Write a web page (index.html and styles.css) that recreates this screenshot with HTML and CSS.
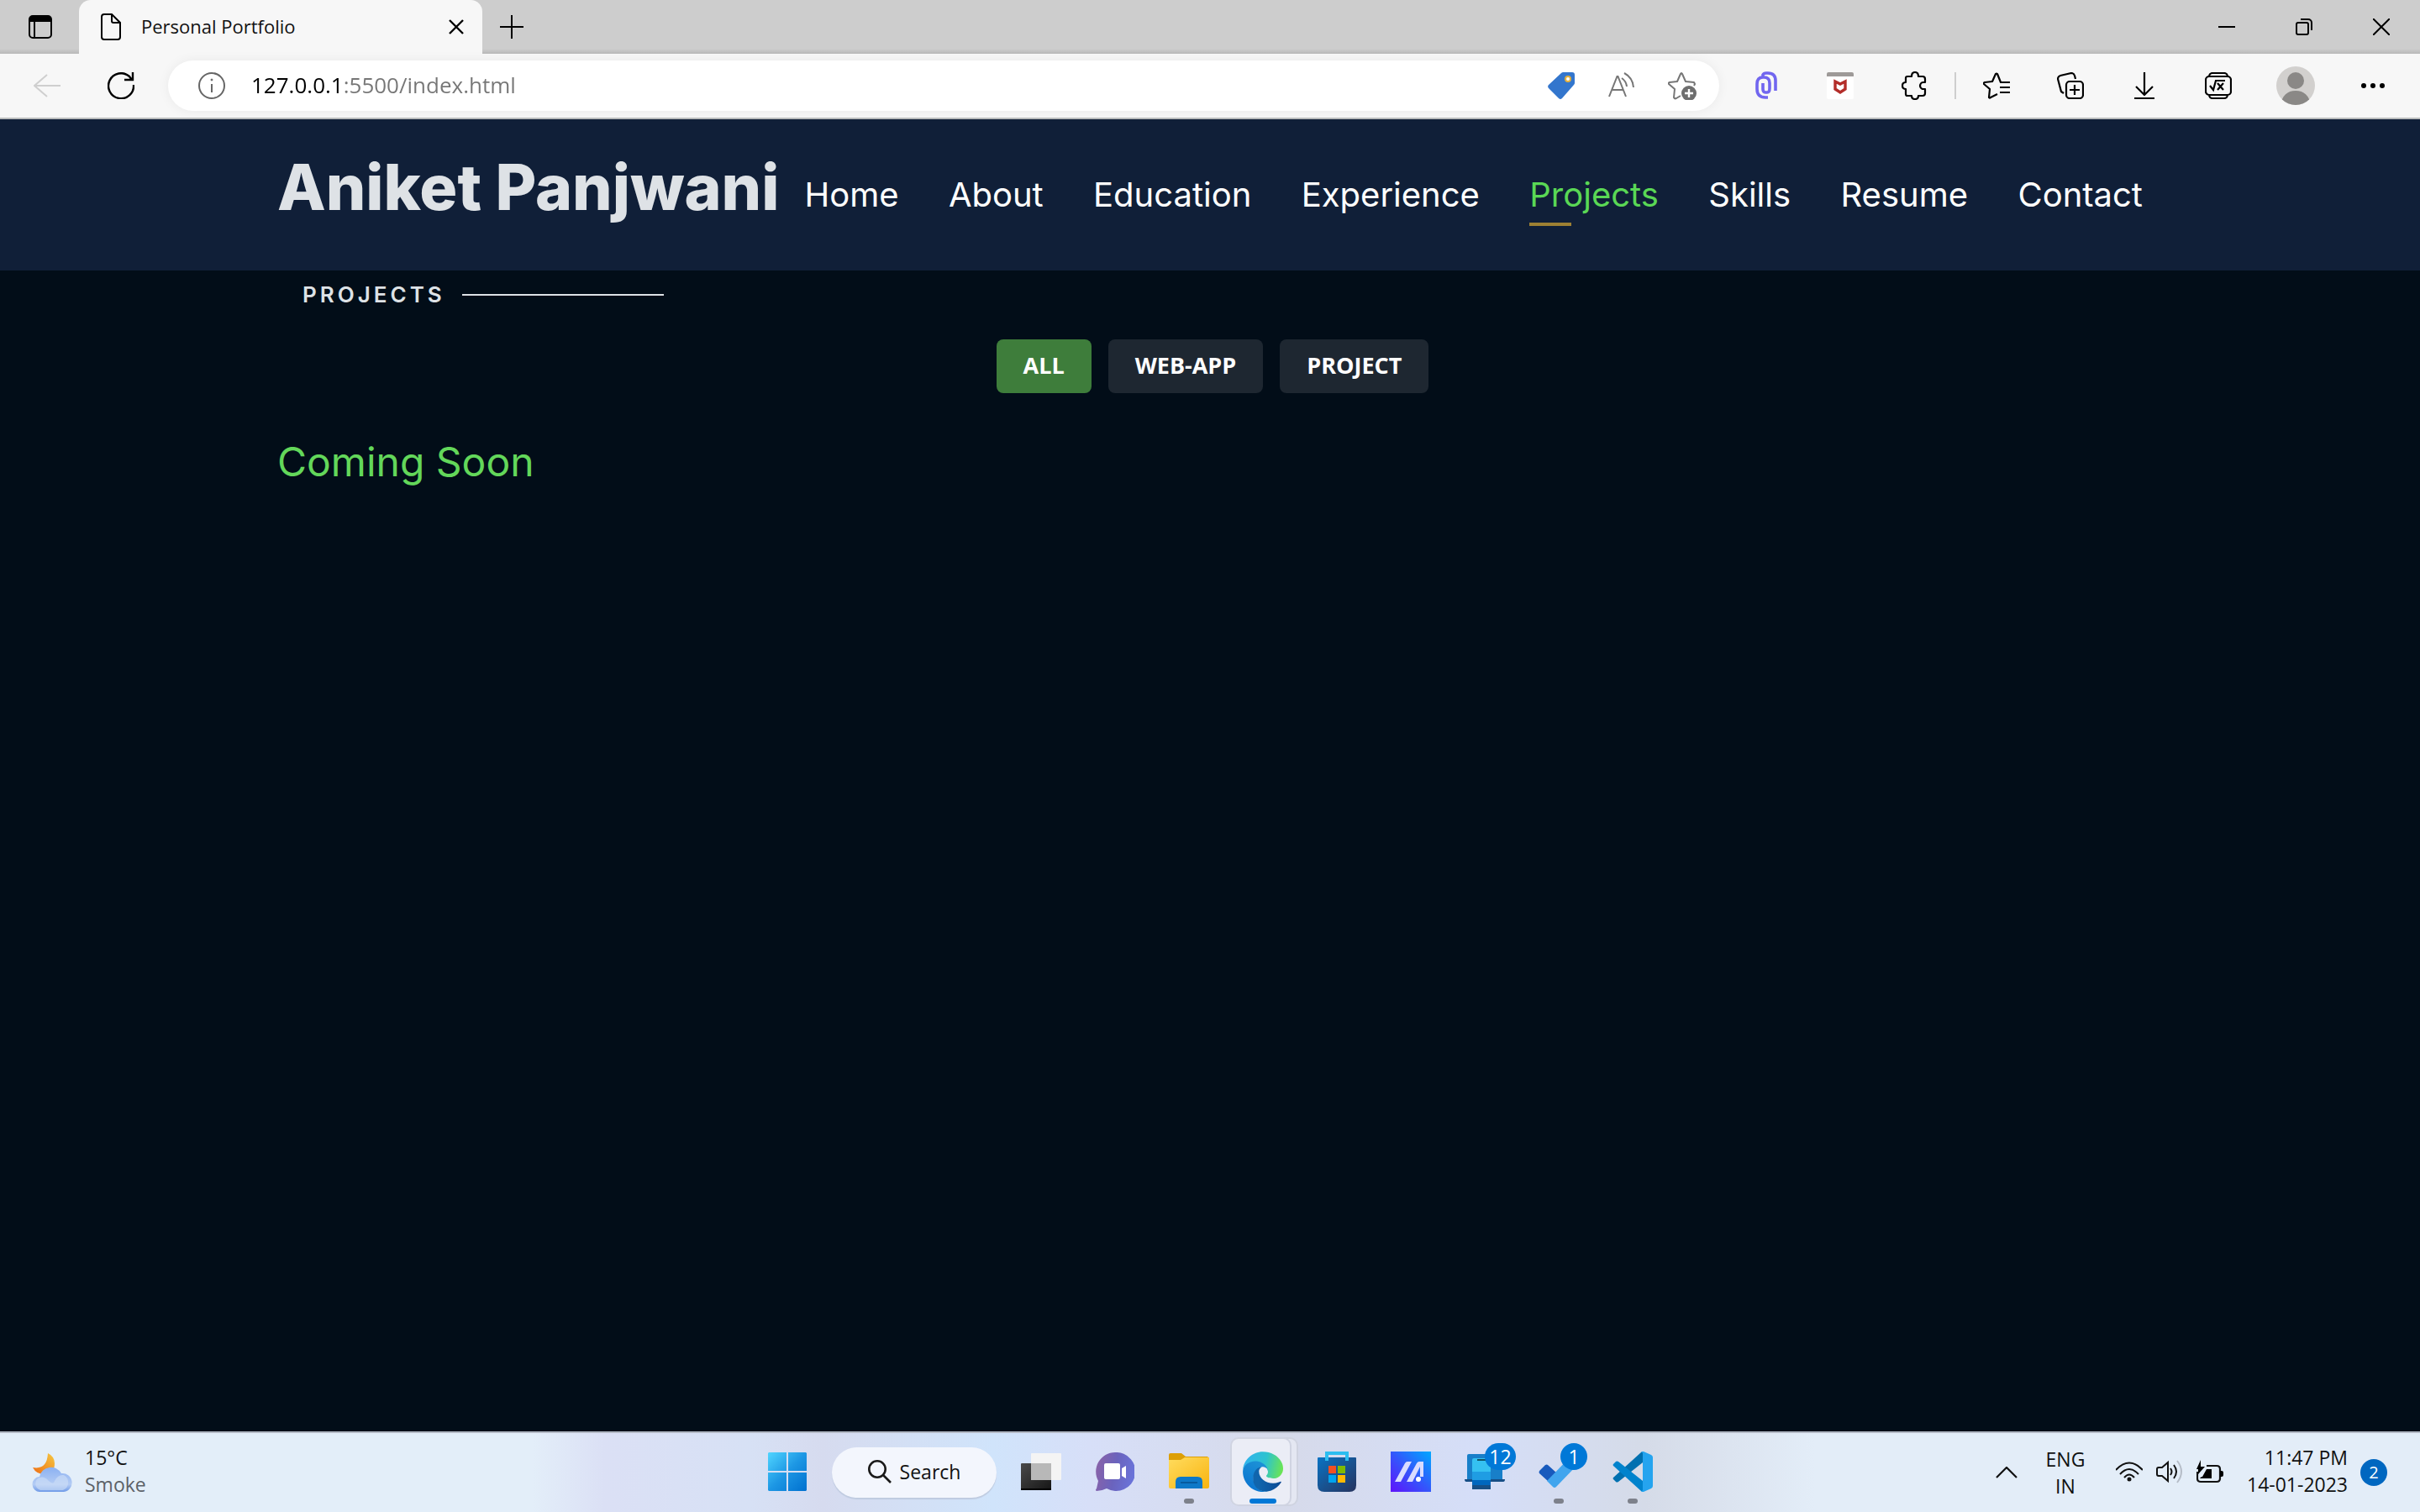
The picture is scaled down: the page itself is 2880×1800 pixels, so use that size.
FILE: index.html
```html
<!DOCTYPE html>
<html lang="en">
<head>
<meta charset="utf-8">
<meta name="viewport" content="width=device-width, initial-scale=1">
<title>Personal Portfolio</title>
<link rel="stylesheet" href="styles.css">
</head>
<body>
<div class="titlebar">
  <button class="tab-actions" aria-label="Tab actions menu">
    <svg width="28" height="28" viewBox="0 0 28 28"><rect x="1" y="1" width="26" height="26" rx="4" fill="none" stroke="#000" stroke-width="2"/><path d="M1 8V5a4 4 0 0 1 4-4h18a4 4 0 0 1 4 4v3z"/><path d="M7 8v19" stroke="#000" stroke-width="2"/></svg>
  </button>
  <div class="tab">
    <svg width="24" height="32" viewBox="0 0 24 32" fill="none" stroke="#000" stroke-width="2"><path d="M13 1H4a3 3 0 0 0-3 3v24a3 3 0 0 0 3 3h16a3 3 0 0 0 3-3V11zM13 1v8a2 2 0 0 0 2 2h8"/></svg>
    <span class="tab-title">Personal Portfolio</span>
    <button class="tab-close" aria-label="Close tab"><svg width="18" height="18" viewBox="0 0 18 18"><path d="M1 1l16 16M17 1L1 17" stroke="#000" stroke-width="2.4"/></svg></button>
  </div>
  <button class="new-tab" aria-label="New tab"><svg width="28" height="28" viewBox="0 0 28 28"><path d="M14 0v28M0 14h28" stroke="#000" stroke-width="2"/></svg></button>
  <div class="window-controls">
    <button aria-label="Minimize"><svg width="20" height="20" viewBox="0 0 20 20"><path d="M0 10h20" stroke="#000" stroke-width="2"/></svg></button>
    <button aria-label="Restore"><svg width="20" height="20" viewBox="0 0 20 20" fill="none" stroke="#000" stroke-width="2"><rect x="1" y="5" width="14" height="14" rx="2"/><path d="M6 1h9a4 4 0 0 1 4 4v9"/></svg></button>
    <button aria-label="Close"><svg width="20" height="20" viewBox="0 0 20 20"><path d="M0 0l20 20M20 0L0 20" stroke="#000" stroke-width="2"/></svg></button>
  </div>
</div>

<div class="toolbar">
  <button class="tool" aria-label="Back"><svg width="32" height="28" viewBox="0 0 32 28" fill="none" stroke="#cfcfcf" stroke-width="2"><path d="M32 14H1M16 1L1 14l15 13"/></svg></button>
  <button class="tool" aria-label="Refresh"><svg width="32" height="32" viewBox="0 0 32 32" fill="none" stroke="#000" stroke-width="2.4"><path d="M31 15A15 15 0 1 1 26 5l3 4M30 0v9H20"/></svg></button>
  <div class="address">
    <button class="site-info" aria-label="Site information"><svg width="32" height="32" viewBox="0 0 32 32" fill="none" stroke="#666" stroke-width="2"><circle cx="16" cy="16" r="15"/><path d="M16 14v10"/><circle cx="16" cy="9" r="1" fill="#666" stroke-width="1"/></svg></button>
    <input class="url" type="text" aria-label="Address" value="127.0.0.1:5500/index.html">
    <button class="chip" aria-label="Shopping"><svg width="32" height="32" viewBox="0 0 32 32"><path d="M19 0h10a3 3 0 0 1 3 3v10a3 3 0 0 1-1 2L17 31a3 3 0 0 1-4 0L1 19a3 3 0 0 1 0-4L16 1a4 4 0 0 1 3-1z" fill="#3376cd"/><circle cx="24" cy="8" r="3" fill="#fff" stroke="#e5b13c" stroke-width="2"/></svg></button>
    <button class="chip" aria-label="Read aloud"><svg width="32" height="32" viewBox="0 0 32 32" fill="none" stroke="#767676" stroke-width="2"><path d="M1 29L10.500 5h1L21 29M5 21h13M16 7a14 14 0 0 1 6 10M19 1a21 21 0 0 1 11 17"/></svg></button>
    <button class="chip" aria-label="Add to favorites"><svg width="34" height="34" viewBox="0 0 34 34" fill="none" stroke="#767676" stroke-width="2" stroke-linejoin="round"><path d="M31 17l1-2-1-2-10-1-4-9q-1-2-2 0l-4 9-9 1q-2 1-1 2l7 6-1 10q1 2 3 1l5-3"/><circle cx="25" cy="26" r="9" fill="#6e6e6e" stroke="none"/><path d="M25 21v10M20 26h10" stroke="#fff" stroke-width="2.400"/></svg></button>
  </div>
  <div class="extensions">
    <button class="tool" aria-label="Clip extension"><svg width="26" height="34" viewBox="0 0 26 34" fill="none" stroke="#7166ef" stroke-width="3.600"><path d="M9 6V4q1-2 4-2h2q9 0 9 9v12M15 31h-3Q2 31 2 21v-6q0-8 7-8h1q7 0 7 7v6q0 5-3 5h-2q-3 0-3-4v-7"/></svg></button>
    <button class="tool" aria-label="McAfee WebAdvisor"><svg width="32" height="32" viewBox="0 0 32 32"><rect width="32" height="32" rx="2" fill="#fff"/><path d="M0 5V2q0-2 2-2h28q2 0 2 2v3z" fill="#9e9a98"/><path d="M10 11l6 3 6-3v9l-6 4-6-4z" fill="#fff" stroke="#b32d29" stroke-width="3.400"/></svg></button>
    <button class="tool" aria-label="Extensions"><svg width="30" height="34" viewBox="0 0 30 34" fill="none" stroke="#000" stroke-width="2.200" stroke-linejoin="round"><path d="M5 8q0-2 2-2h5q0-5 4-5t4 5h5q3 0 3 3v4h-2a4 4 0 0 0 0 8h2v5q0 3-3 3h-5q0 4-4 4t-4-4H7q-2 0-2-2v-6q-4 0-4-4t4-4z"/></svg></button>
    <span class="divider"></span>
    <button class="tool" aria-label="Favorites"><svg width="32" height="32" viewBox="0 0 32 32" fill="none" stroke="#000" stroke-width="2.200" stroke-linejoin="round"><path d="M32 12H21L17 2q-1-1-2 0l-4 9-9 1q-2 1-1 2l7 6-1 10q1 1 2 0l8-4M20 18h12M20 24h12"/></svg></button>
    <button class="tool" aria-label="Collections"><svg width="32" height="32" viewBox="0 0 32 32" fill="none" stroke="#000" stroke-width="2.200"><rect x="11" y="11" width="20" height="20" rx="4"/><path d="M21 15v12M15 21h12M22 8l-1-4q-1-3-4-3L4 4Q1 5 1 8l4 15 3 2"/></svg></button>
    <button class="tool" aria-label="Downloads"><svg width="24" height="32" viewBox="0 0 24 32" fill="none" stroke="#000" stroke-width="2.200"><path d="M12 0v27M2 17l10 10 10-10M0 31h24"/></svg></button>
    <button class="tool" aria-label="Math solver"><svg width="32" height="32" viewBox="0 0 32 32" fill="none" stroke="#000" stroke-width="2.200"><rect x="1" y="5" width="30" height="22" rx="4"/><path d="M5 4q1-3 4-3h14q3 0 4 3M5 28q1 3 4 3h14q3 0 4-3M6 16l4 5 3-11h11M15 13l7 8M22 13l-7 8"/></svg></button>
    <button class="tool profile" aria-label="Profile"><svg width="46" height="46" viewBox="0 0 46 46"><defs><clipPath id="avatar"><circle cx="23" cy="23" r="23"/></clipPath></defs><g clip-path="url(#avatar)"><rect width="46" height="46" fill="#d2d0ce"/><circle cx="23" cy="17" r="10" fill="#8a8886"/><path d="M5 46q3-17 18-17t18 17z" fill="#8a8886"/></g></svg></button>
    <button class="tool" aria-label="Settings and more"><svg width="28" height="6" viewBox="0 0 28 6"><circle cx="3" cy="3" r="3"/><circle cx="14" cy="3" r="3"/><circle cx="25" cy="3" r="3"/></svg></button>
  </div>
</div>

<div class="page">
  <header class="site-header">
    <div class="container header-row">
      <h1 class="logo"><a href="#">Aniket Panjwani</a></h1>
      <nav class="nav" aria-label="Main">
        <a href="#home">Home</a>
        <a href="#about">About</a>
        <a href="#education">Education</a>
        <a href="#experience">Experience</a>
        <a href="#projects" class="active">Projects</a>
        <a href="#skills">Skills</a>
        <a href="#resume">Resume</a>
        <a href="#contact">Contact</a>
      </nav>
    </div>
  </header>
  <main class="container">
    <h2 class="section-title">Projects</h2>
    <div class="filters">
      <button class="filter selected">ALL</button>
      <button class="filter">WEB-APP</button>
      <button class="filter">PROJECT</button>
    </div>
    <p class="soon">Coming Soon</p>
  </main>
</div>

<footer class="taskbar">
  <button class="weather">
    <svg width="48" height="46" viewBox="0 0 48 46"><defs><linearGradient id="moon" x1="1" y1="0" x2="0" y2="1"><stop offset="0" stop-color="#f5c842"/><stop offset="1" stop-color="#ee6d14"/></linearGradient><linearGradient id="cloud" x1="0" y1="0" x2="0" y2="1"><stop offset="0" stop-color="#8bb1f2"/><stop offset=".7" stop-color="#b4ccf4"/><stop offset="1" stop-color="#6f9ae8"/></linearGradient></defs><path d="M19 0q8 4 8 12 0 13-12 13Q5 25 1 17q17 3 18-17z" fill="url(#moon)"/><path d="M10 46a9 9 0 0 1-1-18 14 14 0 0 1 26-4 11 11 0 0 1 3 22z" fill="url(#cloud)"/><path d="M10 44a8 8 0 0 1-1-15q6-2 11 4 6 5 7 0 4-8 11-7a10 10 0 0 1-1 18z" fill="#cfdff7" opacity=".6"/></svg>
    <span class="two-line"><span>15°C</span><span class="muted">Smoke</span></span>
  </button>

  <div class="apps">
    <button class="app" aria-label="Start"><svg width="46" height="46" viewBox="0 0 46 46"><defs><linearGradient id="win" x1="0" y1="0" x2="1" y2="1"><stop offset="0" stop-color="#50d5ff"/><stop offset=".5" stop-color="#1d97e4"/><stop offset="1" stop-color="#0070cf"/></linearGradient></defs><path d="M1 0h21v22H0V1zM24 0h21l1 1v21H24zM0 24h22v22H1l-1-1zM24 24h22v21l-1 1H24z" fill="url(#win)"/></svg></button>
    <button class="search"><svg width="28" height="28" viewBox="0 0 28 28" fill="none" stroke="#1a1a1a" stroke-width="2.600"><circle cx="11" cy="11" r="9.700"/><path d="M18 18l9 9"/></svg><span>Search</span></button>
    <button class="app" aria-label="Task view"><svg width="48" height="44" viewBox="0 0 48 44"><defs><linearGradient id="tv" x1="0" y1="0" x2="1" y2="1"><stop offset="0" stop-color="#4a4a4a"/><stop offset="1" stop-color="#151515"/></linearGradient></defs><rect y="12" width="36" height="32" rx="1" fill="url(#tv)"/><path d="M0 42h36v2H0z"/><rect x="12" width="36" height="32" rx="1" fill="#f4f4f4"/><path d="M12 12h24v20H12z" fill="#b8b8b8"/></svg></button>
    <button class="app" aria-label="Chat"><svg width="46" height="46" viewBox="0 0 46 46"><defs><linearGradient id="chat" x1="0" y1=".3" x2="1" y2=".5"><stop offset="0" stop-color="#8a62a8"/><stop offset=".5" stop-color="#6a63bd"/><stop offset="1" stop-color="#6a74db"/></linearGradient></defs><path d="M23 0a23 23 0 1 1-10 43q-6 3-12 3-2-1 0-3l2-9A23 23 0 0 1 23 0z" fill="url(#chat)"/><rect x="10" y="13" width="19" height="19" rx="2" fill="#fff"/><path d="M31 19l5-3v15l-5-3z" fill="#fff"/></svg></button>
    <button class="app running" aria-label="File Explorer"><svg width="48" height="44" viewBox="0 0 48 44"><defs><linearGradient id="fold" x1="0" y1="0" x2="1" y2="1"><stop offset="0" stop-color="#ffdc5e"/><stop offset="1" stop-color="#f9b410"/></linearGradient></defs><path d="M0 2q0-2 2-2h13l5 4h26l2 2v9H0z" fill="#dd9f06"/><path d="M0 8h14l5-3h29v35q0 2-2 2H2q-2 0-2-2z" fill="url(#fold)"/><path d="M8 42V34q0-6 6-6h20q6 0 6 6v8z" fill="#0d78c8"/><path d="M14 35h20" stroke="#075a9e" stroke-width="2"/></svg></button>
    <button class="app current" aria-label="Microsoft Edge"><svg width="48" height="48" viewBox="0 0 256 256"><defs><linearGradient id="e1" x1=".2" y1="0" x2="1" y2="0"><stop offset="0" stop-color="#1065ad"/><stop offset="1" stop-color="#0c4a94"/></linearGradient><linearGradient id="e2" x1=".7" y1=".2" x2=".3" y2="1"><stop offset="0" stop-color="#1b8fd6"/><stop offset="1" stop-color="#0a73cf"/></linearGradient><linearGradient id="e3" x1="0" y1=".4" x2="1" y2=".55"><stop offset="0" stop-color="#30b2ee"/><stop offset=".55" stop-color="#2dc3cf"/><stop offset="1" stop-color="#6be552"/></linearGradient></defs><path fill="url(#e2)" d="M105.700 241.400c-9-5.600-16.700-12.800-22.900-21.300-26-35.900-18.300-86.100 17.600-112.100 3.900-2.800 7.800-5.400 12.300-7.300 3.100-1.500 8.500-4.100 15.600-4 10.200.1 19.700 4.900 25.800 13 4 5.400 6.300 11.900 6.400 18.700 0-.2 24.500-79.600-80-79.600-43.900 0-80 41.700-80 78.200-.2 19.300 4 38.500 12.100 56 27.600 58.800 94.900 87.600 156.500 67.100-21.100 6.600-44.100 3.500-62.800-8.600z"/><path fill="url(#e1)" d="M231 190.500c-3.400 1.800-6.900 3.400-10.400 4.700-11.600 4.300-23.900 6.500-36.300 6.500-47.800 0-89.400-32.900-89.400-75.100.1-11.600 6.500-22.200 16.600-27.700-43.200 1.800-54.300 46.900-54.300 73.200 0 74.600 68.600 82 83.400 82 8 0 20-2.300 27.200-4.600l1.300-.4c27.600-9.500 51-28.100 66.700-52.800 1.300-2-.5-6.600-4.800-5.800z" transform="translate(8 0)"/><path fill="url(#e3)" d="M152.300 148.900c-.8 1-3.300 2.500-3.300 5.700 0 2.600 1.700 5.100 4.700 7.200 14.400 10 41.500 8.700 41.600 8.700 10.700 0 21.100-2.900 30.300-8.300 18.800-11 30.400-31.100 30.400-52.900.3-22.400-8-37.300-11.300-43.900C223.500 24.200 177.600 1 127.700 1 57.500 1 .4 57.400-.3 127.600c.5-36.500 36.800-66 80-66 3.500 0 23.500.3 42 10.100 16.300 8.600 24.900 18.900 30.800 29.200 6.200 10.700 7.300 24.100 7.300 29.500 0 5.300-2.700 13.300-7.500 18.500z"/></svg></button>
    <button class="app" aria-label="Microsoft Store"><svg width="46" height="48" viewBox="0 0 46 48"><defs><linearGradient id="store" x1="0" y1="0" x2="1" y2="1"><stop offset="0" stop-color="#0a73c4"/><stop offset="1" stop-color="#26335e"/></linearGradient></defs><path d="M0 8q0-1 1-1h44q1 0 1 1v32q0 8-8 8H8q-8 0-8-8z" fill="url(#store)"/><path d="M11 11V2h24v9" fill="none" stroke="#2bbdf0" stroke-width="4"/><path d="M13 17h9v9h-9z" fill="#f25022"/><path d="M24 17h9v9h-9z" fill="#7fba00"/><path d="M13 28h9v9h-9z" fill="#00a4ef"/><path d="M24 28h9v9h-9z" fill="#ffb900"/></svg></button>
    <button class="app" aria-label="MyASUS"><svg width="48" height="48" viewBox="0 0 48 48"><defs><linearGradient id="asus" x1="0" y1="1" x2="1" y2="0"><stop offset="0" stop-color="#6012fb"/><stop offset=".5" stop-color="#3357fb"/><stop offset="1" stop-color="#00a8ff"/></linearGradient></defs><path d="M0 0h48v48H0z" fill="url(#asus)"/><path d="M5 36l12-22q1-2 3-2h5L12 36zM19 36l12-22q1-2 3-2h5v18h-4V18L26 36z" fill="#d9dcff"/><circle cx="33" cy="33" r="3" fill="#fff"/></svg></button>
    <button class="app" aria-label="Phone Link"><svg width="48" height="42" viewBox="0 0 48 42"><path d="M3 2q0-2 2-2h38q2 0 2 2v28H3z" fill="#187fc9"/><path d="M0 30h48q0 3-2 3H2q-2 0-2-3z" fill="#174f86"/><path d="M9 7q0-2 2-2h18q2 0 2 2v14H9z" fill="#35c1f1"/><path d="M9 21h22v10H9z" fill="#1f9de3"/><path d="M9 31h22v9q0 2-2 2H11q-2 0-2-2z" fill="#0067be"/><path d="M9 37h22v5H9z" fill="#174f86"/><path d="M15 7h10" stroke="#156" stroke-width="2"/></svg><span class="count wide">12</span></button>
    <button class="app running" aria-label="To Do"><svg width="48" height="40" viewBox="0 0 48 40"><path d="M1 19l7-7q2-1 3 0l10 9-9 11L1 22q-1-1 0-3z" fill="#185abd"/><path d="M10 31L39 1q2-1 3 0l6 6q1 1 0 3L21 38q-2 2-4 0z" fill="#41a5ee"/></svg><span class="count">1</span></button>
    <button class="app running" aria-label="Visual Studio Code"><svg width="48" height="48" viewBox="0 0 48 48"><path d="M34 1l2-1v13L7 36q-2 1-3 0l-3-3q-1-1 0-2z" fill="#0070b0"/><path d="M4 12q1-1 3 0l29 23v13l-2-1L1 17q-1-1 0-2z" fill="#0083cd"/><path d="M34 0h3l9 4q2 1 2 3v34q0 2-2 3l-9 4h-3l2-2V2z" fill="#25a4ef"/></svg></button>
  </div>

  <div class="tray">
    <button class="chevron" aria-label="Show hidden icons"><svg width="26" height="14" viewBox="0 0 26 14" fill="none" stroke="#111" stroke-width="2.200"><path d="M1 13L13 1l12 12"/></svg></button>
    <button class="lang two-line"><span>ENG</span><span>IN</span></button>
    <button class="status" aria-label="Network, volume and battery">
      <svg width="32" height="24" viewBox="0 0 32 24" fill="none" stroke="#111" stroke-width="2"><path d="M0 10q16-17 32 0M5 15q11-12 22 0M10 19q6-7 12 0"/><circle cx="16" cy="21" r="2.500" fill="#111" stroke="none"/></svg>
      <svg width="32" height="28" viewBox="0 0 32 28" fill="none" stroke="#111" stroke-width="2"><path d="M1 11q0-2 2-2h4l7-6v22l-7-6H3q-2 0-2-2zM17 10q3 4 0 8M21 6q6 8 0 16"/><path d="M25 1q10 13 0 26" stroke="#b6bdc8"/></svg>
      <svg width="32" height="28" viewBox="0 0 32 28"><path d="M12 7h12q4 0 4 4v11q0 4-4 4H5q-4 0-4-4v-8" fill="none" stroke="#111" stroke-width="2.200"/><path d="M28 13h2q2 0 2 2v3q0 2-2 2h-2zM12 11h6v11H4q1-2 3-2zM5 0v8h5L2 17v-6H0z"/></svg>
    </button>
    <button class="clock two-line"><span>11:47 PM</span><span>14-01-2023</span></button>
    <span class="notice">2</span>
  </div>
</footer>
</body>
</html>
```
FILE: styles.css
```css
* { box-sizing: border-box; }

body {
  margin: 0;
  min-height: 100vh;
  display: flex;
  flex-direction: column;
  font-family: "Open Sans", "Noto Sans", sans-serif;
  font-size: 22px;
  line-height: 32px;
  color: #111;
  background: #020d18;
}

button {
  border: 0;
  padding: 0;
  background: none;
  font: inherit;
  color: inherit;
  display: flex;
  align-items: center;
  justify-content: center;
}

a { color: inherit; text-decoration: none; }
svg { display: block; flex: none; }

/* Browser window */
.titlebar {
  display: flex;
  height: 64px;
  background: linear-gradient(#cdcdcd 58px, #b8b8b8);
}
.tab-actions { width: 94px; padding-left: 2px; }
.tab {
  display: flex;
  align-items: center;
  gap: 24px;
  width: 480px;
  padding: 0 22px 0 26px;
  border-radius: 14px 14px 0 0;
  background: #f7f7f7;
}
.tab-title { flex: 1; padding-bottom: 2px; }
.new-tab { width: 70px; }
.window-controls { display: flex; margin-left: auto; }
.window-controls button { width: 92px; }

.toolbar {
  display: flex;
  align-items: center;
  height: 78px;
  padding: 0 12px;
  background: #f7f7f7;
  border-bottom: 2px solid #b9bbbc;
}
.tool { width: 88px; height: 64px; }
.tool.profile { width: 96px; }
.address {
  flex: 1;
  display: flex;
  align-items: center;
  height: 60px;
  margin: 0 12px;
  padding: 0 8px 0 36px;
  border-radius: 30px;
  background: #fff;
  box-shadow: 0 0 14px rgba(0, 0, 0, .06);
}
.url {
  flex: 1;
  min-width: 0;
  height: 56px;
  margin-left: 31px;
  padding: 0 0 2px;
  border: 0;
  outline: 0;
  font: 26px/40px "Open Sans", "Noto Sans", sans-serif;
  color: #000;
  -webkit-text-fill-color: transparent;
  background: linear-gradient(90deg, #000 105px, #767676 105px);
  -webkit-background-clip: text;
  background-clip: text;
}
.chip { width: 72px; height: 56px; }
.extensions { display: flex; align-items: center; }
.divider { width: 2px; height: 32px; margin: 0 4px; background: #cecece; }

/* Portfolio page */
.page { flex: 1; }
.container { width: 100%; max-width: 2280px; margin: 0 auto; padding: 0 30px; }
.site-header { background: #101f38; }
.header-row {
  display: flex;
  align-items: center;
  gap: 30px;
  min-height: 180px;
}
.logo {
  margin: 0 0 18px;
  font: 800 75px/92px Inter, sans-serif;
  color: #dee2e6;
  white-space: nowrap;
}
.nav {
  flex: 1;
  display: flex;
  justify-content: space-between;
  font: 40px/60px Inter, sans-serif;
  color: #fff;
}
.nav .active { position: relative; color: #5ad855; }
.nav .active::after {
  content: "";
  position: absolute;
  left: 0;
  bottom: -7px;
  width: 50px;
  height: 4px;
  background: #9d8033;
}
.section-title {
  display: flex;
  align-items: center;
  gap: 20px;
  margin: 0;
  padding: 9px 30px 7px;
  font: 600 26px/40px Inter, sans-serif;
  letter-spacing: 4px;
  text-transform: uppercase;
  color: #dee2e6;
}
.section-title::after { content: ""; width: 240px; height: 2px; background: #dee2e6; }
.filters {
  display: flex;
  justify-content: center;
  gap: 20px;
  margin-top: 26px;
  padding-left: 6px;
}
.filter {
  height: 64px;
  padding: 0 32px 2px;
  border-radius: 8px;
  background: #1e2731;
  color: #fff;
  font-size: 27px;
  font-weight: 700;
}
.filter.selected { background: #3e7d3b; }
.soon {
  margin: 52px 0 0;
  font: 48px/60px Inter, sans-serif;
  color: #63d75a;
}

/* Taskbar */
.taskbar {
  display: grid;
  grid-template-columns: 1fr auto 1fr;
  height: 96px;
  font-size: 23px;
  border-top: 2px solid #b3b8c4;
  background: linear-gradient(90deg, #e3eef9 22%, #dbe0f5 25%, #d7e1f5 31%, #d6dbef 34%, #d0e4fb 41%, #d7dff8 45%, #d6daea 53%, #d5def8 61%, #d5dbe8 68%, #e3edf8 75%);
}
.two-line { display: flex; flex-direction: column; padding-bottom: 4px; line-height: 32px; }
.weather { justify-self: start; padding-left: 38px; gap: 15px; }
.weather .two-line { align-items: flex-start; }
.muted { color: #5c6168; }
.apps { display: flex; align-items: center; }
.app { position: relative; width: 88px; height: 94px; padding-bottom: 2px; }
.search {
  gap: 10px;
  width: 196px;
  height: 60px;
  margin: 0 9px;
  padding-bottom: 2px;
  border-radius: 30px;
  background: #f3f6fd;
  box-shadow: 0 2px 1px #bfcbe0;
}
.running::after,
.current::after {
  content: "";
  position: absolute;
  bottom: 10px;
  width: 12px;
  height: 6px;
  border-radius: 3px;
  background: #7d818b;
}
.current::after { width: 32px; background: #0078d7; }
.current::before {
  content: "";
  position: absolute;
  z-index: -1;
  inset: 7px 12px 9px 7px;
  border-radius: 8px;
  background: #ebedf6;
  box-shadow: 0 0 0 2px #d0d4e2, 8px 0 0 #e4e7f2, 8px 0 0 2px #cfd3e0;
}
.current { isolation: isolate; }
.count {
  position: absolute;
  top: 12px;
  left: 46px;
  width: 32px;
  border-radius: 16px;
  background: #0078d7;
  color: #fff;
}
.count.wide { left: 44px; width: 37px; }
.tray { display: flex; justify-content: flex-end; padding-right: 39px; }
.chevron { width: 56px; }
.lang { width: 64px; margin-left: 10px; padding: 0; }
.status { gap: 16px; margin: 0 28px; padding-bottom: 2px; }
.clock { align-items: flex-end; }
.notice {
  align-self: center;
  width: 32px;
  margin-left: 15px;
  border-radius: 16px;
  background: #0067c0;
  color: #fff;
  text-align: center;
  font-size: 20px;
}
```
